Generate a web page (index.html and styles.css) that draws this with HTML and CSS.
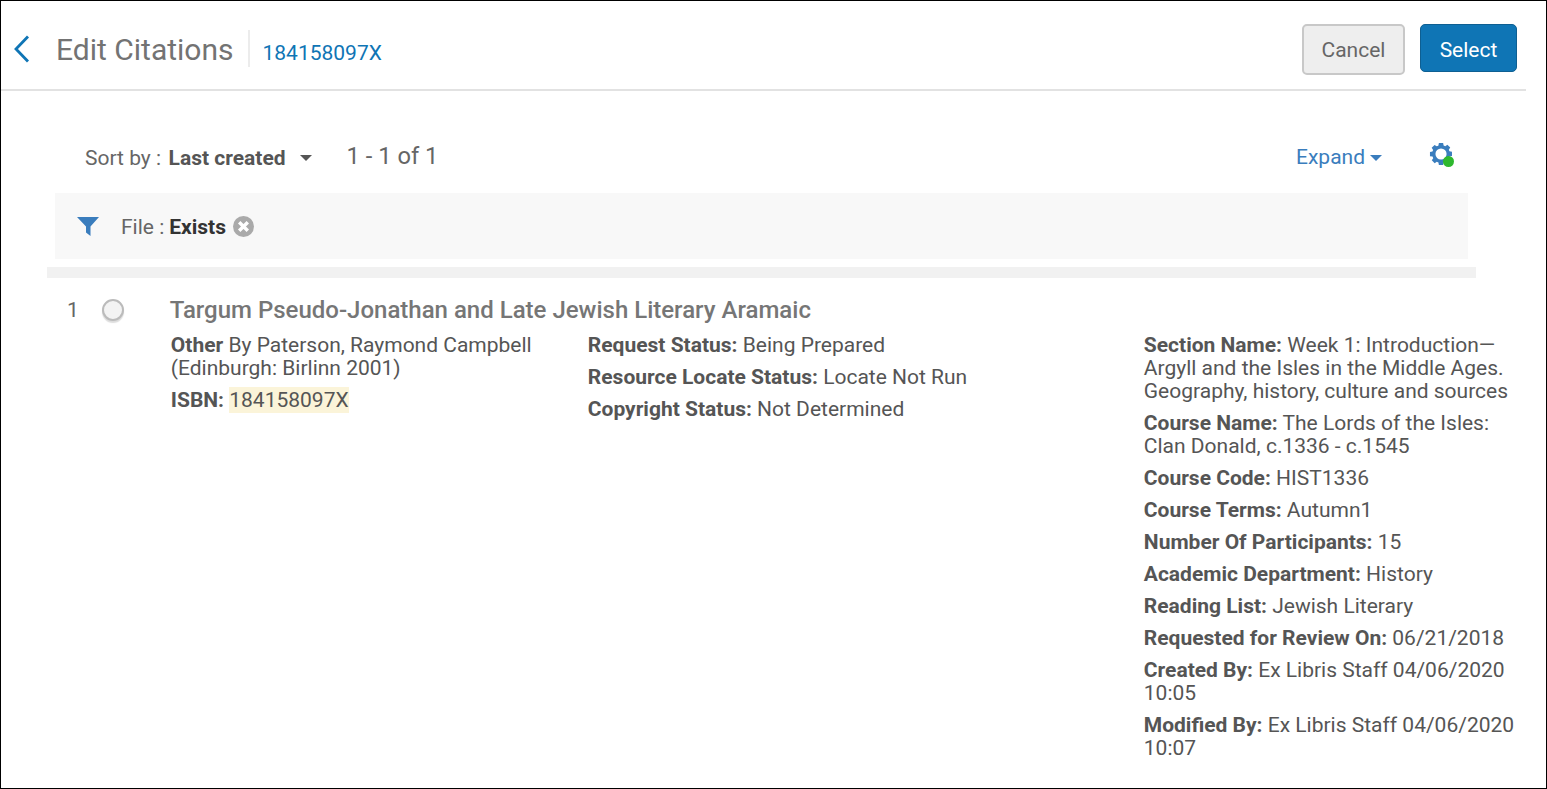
FILE: index.html
```html
<!DOCTYPE html>
<html lang="en">
<head>
    <meta charset="UTF-8">
    <title>Edit Citations</title>
    <link rel="stylesheet" href="styles.css">
</head>
<body>
<div class="frame">

    <!-- Page header -->
    <header class="page-header">
        <svg class="back-icon" width="20" height="30" viewBox="0 0 20 30"><path d="M16 2.500 L4 15 L16 27.500" fill="none" stroke="#0f75b5" stroke-width="2.800"/></svg>
        <h1 class="page-title">Edit Citations</h1>
        <a class="page-sub">184158097X</a>
        <div class="header-actions">
            <button class="btn btn-cancel">Cancel</button>
            <button class="btn btn-select">Select</button>
        </div>
    </header>

    <div class="content">
        <!-- Sort and paging -->
        <div class="toolbar">
            <span class="sort-label">Sort by :</span>
            <span class="sort-value">Last created</span>
            <span class="caret caret-grey"></span>
            <span class="paging">1 - 1 of 1</span>
            <a class="expand">Expand<span class="caret caret-blue"></span></a>
            <span class="gear-wrap">
                <svg width="25" height="25" viewBox="0 0 26 26"><path fill="#3a7dbd" fill-rule="evenodd" d="M10.300 1h4.400l.5 2.600 1.700.7 2.200-1.500 3 3-1.500 2.200.7 1.700 2.600.5v4.400l-2.600.5-.7 1.700 1.500 2.200-3 3-2.200-1.500-1.700.7-.5 2.600h-4.400l-.5-2.600-1.700-.7-2.200 1.500-3-3 1.500-2.200-.7-1.700L1 14.800v-4.400l2.600-.5.7-1.700-1.500-2.200 3-3 2.200 1.500 1.700-.7z M12.500 6.700a5.800 5.800 0 1 0 0 11.600 5.800 5.800 0 0 0 0-11.600z"/></svg>
                <span class="status-dot"></span>
            </span>
        </div>

        <!-- Active filter -->
        <div class="filter-bar">
            <svg width="22" height="19" viewBox="0 0 22 19"><path fill="#3a7dbd" d="M0 0h22L13.500 9.500V19l-4.500-3.500V9.500z"/></svg>
            <span class="filter-label">File :</span>
            <span class="filter-value">Exists</span>
            <svg width="21" height="21" viewBox="0 0 21 21"><circle cx="10.500" cy="10.500" r="10.500" fill="#aaa"/><path d="M6.200 6.200l8.600 8.600M14.800 6.200l-8.600 8.600" stroke="#fff" stroke-width="3.400"/></svg>
        </div>

        <div class="divider"></div>

        <!-- Result row -->
        <div class="result">
            <span class="result-num">1</span>
            <span class="radio"></span>
            <div class="result-body">
                <h2 class="result-title">Targum Pseudo-Jonathan and Late Jewish Literary Aramaic</h2>
                <div class="columns">
                    <div class="col col-a">
                        <p><b>Other</b> By Paterson, Raymond Campbell (Edinburgh: Birlinn 2001)</p>
                        <p><b>ISBN:</b> <span class="hl">184158097X</span></p>
                    </div>
                    <div class="col col-b">
                        <p><b>Request Status:</b> Being Prepared</p>
                        <p><b>Resource Locate Status:</b> Locate Not Run</p>
                        <p><b>Copyright Status:</b> Not Determined</p>
                    </div>
                    <div class="col col-c">
                        <p><b>Section Name:</b> Week 1: Introduction—Argyll and the Isles in the Middle Ages. Geography, history, culture and sources</p>
                        <p><b>Course Name:</b> The Lords of the Isles: Clan Donald, c.1336 - c.1545</p>
                        <p><b>Course Code:</b> HIST1336</p>
                        <p><b>Course Terms:</b> Autumn1</p>
                        <p><b>Number Of Participants:</b> 15</p>
                        <p><b>Academic Department:</b> History</p>
                        <p><b>Reading List:</b> Jewish Literary</p>
                        <p><b>Requested for Review On:</b> 06/21/2018</p>
                        <p><b>Created By:</b> Ex Libris Staff 04/06/2020 10:05</p>
                        <p><b>Modified By:</b> Ex Libris Staff 04/06/2020 10:07</p>
                    </div>
                </div>
            </div>
        </div>
    </div>
</div>
</body>
</html>
```

FILE: styles.css
```css
html, body {
    margin: 0;
    padding: 0;
}

body {
    font-family: 'Roboto', 'Liberation Sans', sans-serif;
    font-size: 21px;
    color: #555;
    background-color: #fff;
}

.frame {
    box-sizing: border-box;
    width: 1547px;
    height: 789px;
    border: 1px solid #000;
    overflow: hidden;
}

/* Header */
.page-header {
    display: flex;
    align-items: center;
    width: 1525px;
    height: 88px;
    border-bottom: 2px solid #e2e2e2;
}

.back-icon {
    margin-left: 11px;
    margin-top: 7px;
}

.page-title {
    margin: 7px 0 0 24px;
    padding-right: 15px;
    height: 37px;
    line-height: 39px;
    border-right: 2px solid #ececec;
    font-size: 30px;
    font-weight: 400;
    color: #737373;
}

.page-sub {
    margin-left: 12px;
    margin-top: 15px;
    color: #0f75b5;
}

.header-actions {
    display: flex;
    margin-left: auto;
    margin-right: 9px;
    margin-top: 8px;
    align-items: flex-start;
    gap: 15px;
}

.btn {
    font-family: inherit;
    font-size: 21px;
    border-radius: 5px;
    cursor: pointer;
}

.btn-cancel {
    width: 103px;
    height: 51px;
    padding-top: 2px;
    color: #666;
    background-color: #eee;
    border: 2px solid #c8c8c8;
}

.btn-select {
    width: 97px;
    height: 48px;
    padding-top: 6px;
    color: #fff;
    background-color: #0f75b5;
    border: 1px solid #0e5f92;
}

/* Toolbar */
.content {
    padding-left: 46px;
}

.toolbar {
    display: flex;
    align-items: center;
    width: 1421px;
    height: 102px;
    box-sizing: border-box;
    padding: 32px 0 0 38px;
}

.sort-label {
    color: #666;
}

.sort-value {
    margin-left: 7.500px;
    font-weight: 700;
    color: #555;
}

.caret {
    display: inline-block;
    width: 0;
    height: 0;
    border-left: 6px solid transparent;
    border-right: 6px solid transparent;
}

.caret-grey {
    margin-left: 14.500px;
    border-top: 6px solid #555;
}

.caret-blue {
    margin-left: 5px;
    margin-bottom: 3px;
    border-top: 6px solid #3a7dbd;
}

.paging {
    margin-left: 34.500px;
    margin-top: -5px;
    font-size: 23.700px;
    color: #666;
}

.expand {
    margin-left: auto;
    margin-top: -2px;
    color: #3a7dbd;
}

.gear-wrap {
    position: relative;
    display: block;
    width: 26px;
    height: 26px;
    margin-left: 47px;
    margin-right: 13px;
    margin-top: -6px;
}

.status-dot {
    position: absolute;
    right: 1px;
    bottom: 1px;
    width: 11px;
    height: 11px;
    border-radius: 50%;
    background-color: #2eb82e;
}

/* Filter */
.filter-bar {
    display: flex;
    align-items: center;
    box-sizing: border-box;
    width: 1413px;
    height: 66px;
    margin-left: 8px;
    padding-left: 22px;
    background-color: #f8f8f8;
}

.filter-label {
    margin-left: 22px;
    margin-top: 2px;
    color: #666;
}

.filter-value {
    margin-left: 5px;
    margin-right: 7px;
    margin-top: 2px;
    font-weight: 700;
    color: #333;
}

.divider {
    width: 1429px;
    height: 11px;
    margin-top: 8px;
    background-color: #f1f1f1;
}

/* Result */
.result {
    display: flex;
    align-items: flex-start;
}

.result-num {
    margin: 21px 0 0 20px;
    line-height: 23px;
    color: #666;
}

.radio {
    box-sizing: border-box;
    flex: none;
    width: 22px;
    height: 22px;
    margin: 21px 0 0 23px;
    border: 2px solid #bbb;
    border-radius: 50%;
    background-color: #f3f3f3;
    box-shadow: 0 2px 1px #ddd;
}

.result-body {
    margin-left: 46px;
}

.result-title {
    margin: 17px 0 0 0;
    font-size: 24px;
    line-height: 30px;
    font-weight: 500;
    color: #767676;
}

.columns {
    display: flex;
    margin-top: 9px;
    line-height: 23px;
}

.col p {
    margin: 0 0 9px 0;
}

.col b {
    font-weight: 700;
}

.col-a {
    width: 376px;
    margin-left: 1px;
}

.col-b {
    width: 556px;
    margin-left: 41px;
}

.col-c {
    width: 372px;
}

.hl {
    background-color: #fbf4d9;
    padding: 1px 0;
}
```
